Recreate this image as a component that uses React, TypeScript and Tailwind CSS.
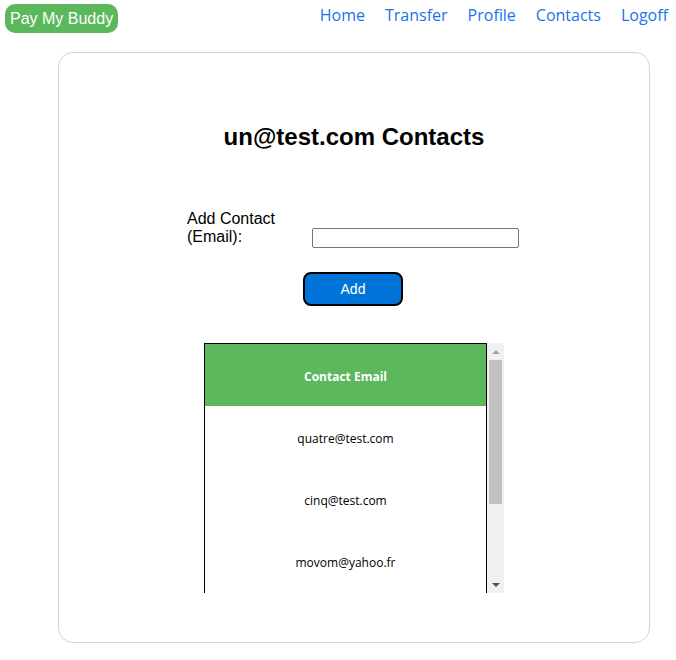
import { useState } from "react";

const navLinks = ["Home", "Transfer", "Profile", "Contacts", "Logoff"];

const contacts = [
  "quatre@test.com",
  "cinq@test.com",
  "movom@yahoo.fr",
  "six@test.com",
  "sept@test.com",
];

function FakeScrollbar() {
  return (
    <div className="flex w-[17px] shrink-0 flex-col bg-[#f1f1f1]">
      <div className="flex h-[17px] items-center justify-center">
        <div className="h-0 w-0 border-x-[4px] border-b-[4px] border-x-transparent border-b-[#a3a3a3]" />
      </div>
      <div className="mx-[2px] h-[144px] bg-[#c1c1c1]" />
      <div className="flex-1" />
      <div className="flex h-[17px] items-center justify-center">
        <div className="h-0 w-0 border-x-[4px] border-t-[4px] border-x-transparent border-t-[#505050]" />
      </div>
    </div>
  );
}

export default function App() {
  const [email, setEmail] = useState("");

  return (
    <div className="min-h-[660px] w-[676px] bg-white">
      {/* Top bar */}
      <header className="flex items-start justify-between pl-[5px] pr-[8px] pt-[4px]">
        <div className="rounded-[10px] bg-[#5cb85c] px-[5px] py-[5px] text-[16px] leading-[19px] text-white font-['Liberation_Sans',Arial,sans-serif]">
          Pay My Buddy
        </div>
        <nav className="-mt-[1px] flex gap-[20px] text-[16px] leading-6 text-[#1a73e8] font-['Open_Sans',sans-serif]">
          {navLinks.map((label) => (
            <a key={label} href="#">
              {label}
            </a>
          ))}
        </nav>
      </header>

      {/* Card */}
      <main className="ml-[58px] mt-[19px] w-[592px] rounded-[15px] border border-[#d3d3d3] pb-[49px] pt-[70px] font-['Liberation_Sans',Arial,sans-serif]">
        <h2 className="text-center text-[24px] font-bold leading-[28px] text-black">
          un@test.com Contacts
        </h2>

        <div className="mt-[59px] flex items-end justify-center pr-[2px]">
          <label className="w-[125px] pb-[2px] text-[16px] leading-[18px] text-black">
            Add Contact (Email):
          </label>
          <input
            value={email}
            onChange={(e) => setEmail(e.target.value)}
            className="h-[20px] w-[207px] rounded-[2px] border border-[#767676] bg-white px-1 text-[13px] outline-none"
          />
        </div>

        <div className="mt-[24px] flex justify-center pr-[2px]">
          <button className="h-[34px] w-[100px] rounded-[8px] border-2 border-black bg-[#0074d9] text-[14px] text-white">
            Add
          </button>
        </div>

        {/* Contacts table */}
        <div className="mx-auto mt-[37px] flex h-[250px] w-[300px] overflow-hidden">
          <div className="w-[283px] overflow-hidden border-x border-t border-black font-['Open_Sans',sans-serif] text-[12px]">
            <div className="flex h-[62px] items-center justify-center bg-[#5cb85c] pt-[3px] font-bold text-white">
              Contact Email
            </div>
            {contacts.map((c) => (
              <div key={c} className="flex h-[62px] items-center justify-center pt-[3px] text-black">
                {c}
              </div>
            ))}
          </div>
          <FakeScrollbar />
        </div>
      </main>
    </div>
  );
}
